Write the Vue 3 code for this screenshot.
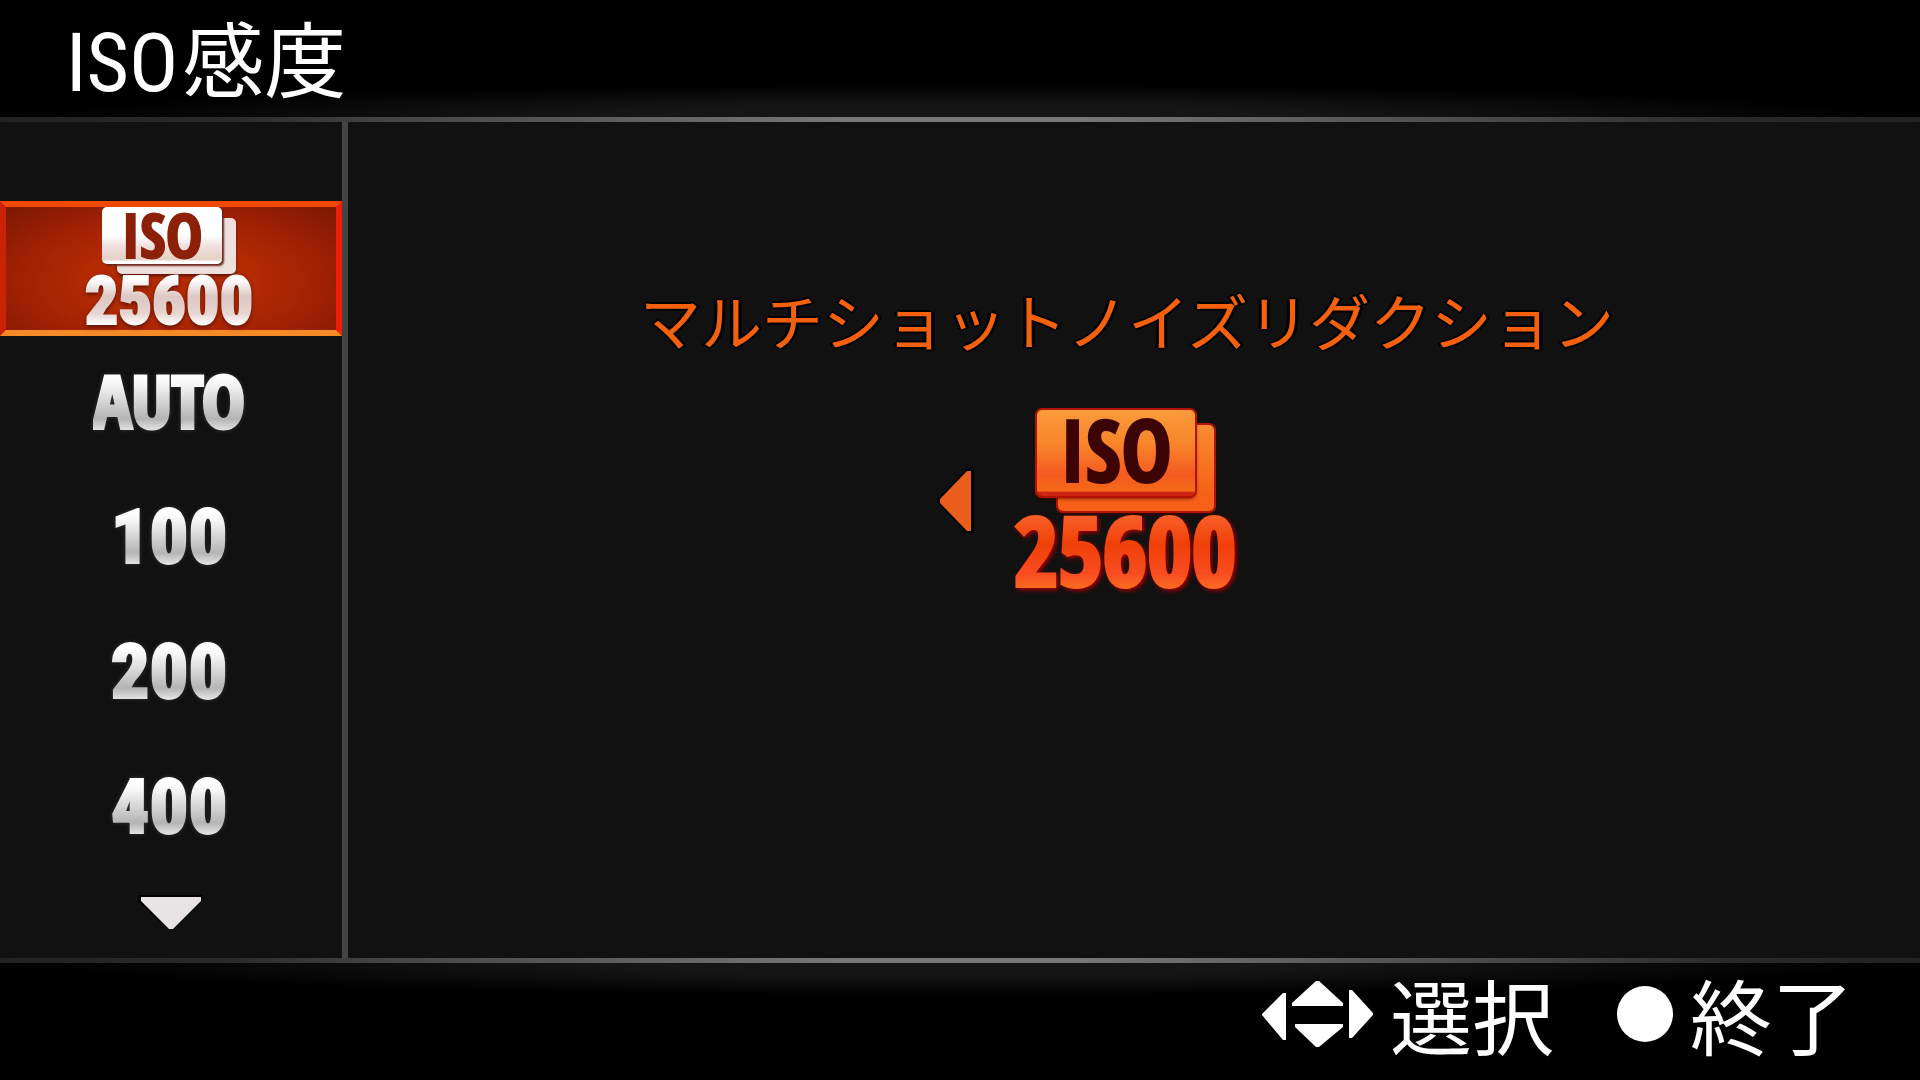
<script setup>
import { ref } from "vue"

const options = ref([
  { id: "multi", label: "25600", multiShot: true },
  { id: "auto", label: "AUTO", word: true },
  { id: "100", label: "100" },
  { id: "200", label: "200" },
  { id: "400", label: "400" }
])
const selected = ref("multi")
</script>

<template>
  <div class="screen">
    <header class="header">
      <h1><span class="latin">ISO</span>感度</h1>
    </header>
    <div class="rule"></div>
    <div class="body">
      <nav class="sidebar">
        <button v-for="option in options" :key="option.id" class="option" :class="{ active: option.id === selected }"
          @click="selected = option.id">
          <span v-if="option.multiShot" class="badge"><span class="card">ISO</span></span>
          <span class="value" :class="{ word: option.word }">{{ option.label }}</span>
        </button>
        <button class="more" aria-label="down">
          <svg width="66" height="36" viewBox="0 0 66 36">
            <path d="M0 0H64V6L36 34H30L0 6Z" fill="#000" />
            <path d="M3 2H63V6L35 34H31L3 6Z" fill="#e8e4e6" />
          </svg>
        </button>
      </nav>
      <main class="detail">
        <h2>マルチショットノイズリダクション</h2>
        <div class="setting">
          <button class="prev" aria-label="left">
            <svg width="36" height="64" viewBox="0 0 36 64">
              <path d="M28 0H36V64H28L0 35V29Z" fill="#000" />
              <path d="M29 2H33V62H29L2 34V30Z" fill="#ea5e1c" />
            </svg>
          </button>
          <div class="big">
            <span class="badge"><span class="card">ISO</span></span>
            <span class="value">25600</span>
          </div>
        </div>
      </main>
    </div>
    <div class="rule"></div>
    <footer class="footer">
      <button class="hint">
        <svg width="112" height="66" viewBox="0 0 112 66" fill="#fff">
          <path d="M0 33L21 12H24V59H21L0 34Z" />
          <path d="M87 9H90L111 32V34L90 57H87Z" />
          <path d="M30 25V22L54 0H57L81 22V25Z" />
          <path d="M33 43H81V46L57 66H54L33 46Z" />
        </svg>
        選択
      </button>
      <button class="hint">
        <svg width="58" height="58" viewBox="0 0 58 58"><circle cx="29" cy="29" r="28" fill="#fff" /></svg>
        終了
      </button>
    </footer>
  </div>
</template>

<style>
body {
  background: #000;
}
</style>

<style scoped>
.screen {
  display: flex;
  flex-direction: column;
  min-height: 100vh;
  background: #000;
  color: #fff;
  font-family: "Noto Sans CJK JP", sans-serif;
}

button {
  border: none;
  padding: 0;
  background: none;
  color: inherit;
  font: inherit;
  cursor: pointer;
}

svg {
  display: block;
}

.header {
  display: flex;
  align-items: center;
  height: 117px;
  padding: 2px 66px 0;
  box-sizing: border-box;
  background: radial-gradient(ellipse 48% 32px at 50% 100%, #151515 40%, #000 100%);
}

h1 {
  display: flex;
  align-items: baseline;
  gap: 4px;
  margin: 0;
  font-size: 82px;
  font-weight: 400;
  line-height: 112px;
}

.latin {
  font-family: "Roboto Condensed", "Noto Sans CJK JP", sans-serif;
}

.rule {
  height: 5px;
  background: linear-gradient(90deg, #222 0%, #2a2a2a 12%, #444 20%, #777 44%, #777 56%, #444 80%, #2a2a2a 90%, #222 100%);
}

.body {
  display: flex;
  flex: 1;
  background: #111;
}

.sidebar {
  display: flex;
  flex-direction: column;
  width: 342px;
  padding-top: 79px;
  border-right: 6px solid #444;
}

.option {
  display: flex;
  flex-direction: column;
  align-items: center;
  justify-content: center;
  height: 135px;
  padding: 0 4px 4px 0;
}

.value {
  font-family: "Roboto Condensed", "Liberation Sans", sans-serif;
  font-weight: 900;
  font-size: 76px;
  line-height: 80px;
  color: transparent;
  background: linear-gradient(#fff 20%, #f4f4f4 30%, #b4b4b4 70%, #e8e8e8 85%);
  background-clip: text;
  -webkit-text-stroke: 2px transparent;
  filter: drop-shadow(0 0 2px #333);
}

.value.word,
.big .value {
  font-family: "Open Sans Condensed", "Liberation Sans", sans-serif;
  font-weight: 700;
  -webkit-text-stroke: 4px transparent;
}

.value.word {
  font-size: 72px;
  padding-bottom: 4px;
}

.option.active {
  padding: 0 4px 0 0;
  border: 6px solid;
  border-color: #ee4a06 #f01e04 #f58a26 #c92204;
  background: radial-gradient(ellipse at 50% 60%, #b42a02 35%, #a02004 65%, #7c1804 100%);
}

.option.active .value {
  margin-top: 10px;
  font-size: 66px;
  line-height: 56px;
  background-image: linear-gradient(#fff 10%, #dcc8c4 40%, #e6d4d0 70%, #fff 90%);
  filter: drop-shadow(0 2px 2px #5c1408);
}

.badge {
  position: relative;
  display: block;
  width: 120px;
  height: 62px;
  margin-right: 14px;
}

.badge::before {
  content: "";
  position: absolute;
  inset: 11px -14px -10px 15px;
  border-radius: 5px;
  background: #eee0dd;
  box-shadow: 0 2px 3px #5c1408;
}

.card {
  position: relative;
  display: block;
  height: 100%;
  border-radius: 5px;
  background: linear-gradient(#fff 50%, #f0dedd 70%, #e4d2c6 92%, #fff 96%);
  box-shadow: 2px 2px 2px #6c241a;
  color: #8c2008;
  font-family: "Open Sans Condensed", "Liberation Sans", sans-serif;
  font-weight: 700;
  font-size: 62px;
  line-height: 54px;
  text-align: center;
  -webkit-text-stroke: 2px #8c2008;
}

.more {
  align-self: center;
  margin-top: 19px;
}

.detail {
  flex: 1;
  display: flex;
  flex-direction: column;
  align-items: center;
  padding: 152px 14px 0 0;
}

h2 {
  margin: 0;
  color: #f4600c;
  font-size: 61px;
  font-weight: 400;
  line-height: 92px;
  white-space: nowrap;
  text-shadow: 3px 0 #000, -3px 0 #000, 0 2px #000, 0 -2px #000;
}

.setting {
  display: flex;
  align-items: center;
  gap: 40px;
  margin-top: 44px;
  padding-right: 80px;
}

.prev {
  padding-bottom: 6px;
}

.big {
  display: flex;
  flex-direction: column;
  align-items: center;
}

.big .badge {
  width: 158px;
  height: 86px;
  margin-right: 18px;
}

.big .badge::before {
  inset: 15px -19px -15px 21px;
  background: linear-gradient(#f98c30, #f66018 80%);
  box-shadow: 0 0 0 2px #b01400, 0 2px 5px #5a0000;
}

.big .card {
  background: linear-gradient(#fa9a3c, #f8842a 40%, #f45a20 75%, #f46a18 94%, #d02410 96%);
  box-shadow: 0 0 0 2px #b01400, 0 2px 4px #5a0000;
  color: #3c0404;
  font-size: 86px;
  line-height: 78px;
  -webkit-text-stroke: 2px #3c0404;
}

.big .value {
  font-size: 96px;
  line-height: 98px;
  margin-top: 4px;
  background-image: linear-gradient(#f8602a 15%, #f04008 45%, #f84c20 75%, #fa6a20 90%);
  filter: drop-shadow(2px 2px 2px #a00000);
}

.footer {
  display: flex;
  justify-content: flex-end;
  gap: 62px;
  height: 117px;
  padding: 0 66px 15px 0;
  box-sizing: border-box;
  background: radial-gradient(ellipse 48% 32px at 50% 0, #151515 40%, #000 100%);
}

.hint {
  display: flex;
  align-items: center;
  gap: 16px;
  font-size: 82px;
  line-height: 102px;
}
</style>
